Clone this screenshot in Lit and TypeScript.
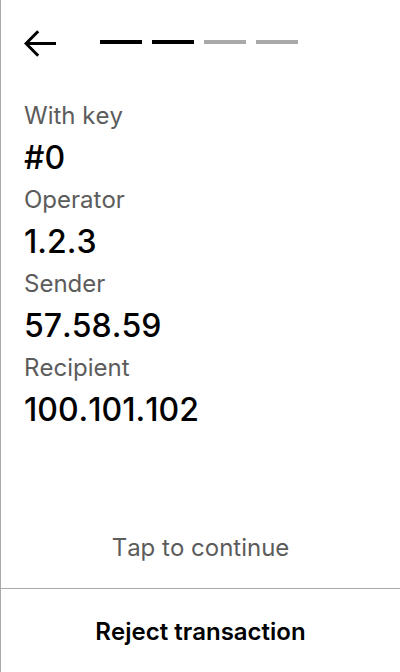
import { LitElement, html, css } from "lit";
import { customElement, state } from "lit/decorators.js";
import { classMap } from "lit/directives/class-map.js";

const FIELDS = [
  { label: "With key", value: "#0" },
  { label: "Operator", value: "1.2.3" },
  { label: "Sender", value: "57.58.59" },
  { label: "Recipient", value: "100.101.102" },
];

@customElement("app-root")
export class AppRoot extends LitElement {
  @state() private page = 2;
  private readonly pages = 4;

  static styles = css`
    :host {
      display: flex;
      flex-direction: column;
      box-sizing: border-box;
      min-height: 100vh;
      border-left: 1px solid #a9a9a9;
      background: #fff;
      color: #000;
      font-family: Inter, "Liberation Sans", sans-serif;
      font-kerning: none;
      font-feature-settings: "calt" 0;
    }
    button {
      border: 0;
      background: none;
      color: inherit;
      font: inherit;
      font-kerning: none;
      font-feature-settings: "calt" 0;
      cursor: pointer;
    }
    .top {
      display: flex;
      align-items: center;
      gap: 44px;
      height: 84px;
      padding: 0 23px;
    }
    .back {
      display: flex;
      padding: 0;
    }
    .steps {
      display: flex;
      gap: 10px;
    }
    .step {
      width: 42px;
      height: 4px;
      background: #a9a9a9;
    }
    .step.done {
      background: #000;
    }
    .fields {
      flex: 1;
      margin: 0;
      padding: 16px 23px;
    }
    .label {
      color: #5c5c5c;
      font-size: 24px;
      line-height: 32px;
    }
    .value {
      margin: 0;
      font-size: 32px;
      font-weight: 500;
      line-height: 52px;
    }
    .next {
      padding: 20px 0;
      color: #5c5c5c;
      font-size: 24px;
      line-height: 40px;
    }
    .reject {
      height: 84px;
      padding: 2px 0 0;
      border-top: 1px solid #a9a9a9;
      font-size: 24px;
      font-weight: 600;
    }
  `;

  render() {
    return html`
      <header class="top">
        <button class="back" aria-label="Back" @click=${() => (this.page = Math.max(1, this.page - 1))}>
          <svg width="32" height="32" viewBox="0 0 32 32" fill="none" stroke="#000" stroke-width="3">
            <path d="M32 17.5H2M14.2 5.2L2 17.5L14.2 29.8" />
          </svg>
        </button>
        <div class="steps">
          ${Array.from({ length: this.pages }, (_, i) => html`<span class=${classMap({ step: true, done: i < this.page })}></span>`)}
        </div>
      </header>
      <dl class="fields">
        ${FIELDS.map((f) => html`<dt class="label">${f.label}</dt><dd class="value">${f.value}</dd>`)}
      </dl>
      <button class="next" @click=${() => (this.page = Math.min(this.pages, this.page + 1))}>Tap to continue</button>
      <button class="reject">Reject transaction</button>
    `;
  }
}
